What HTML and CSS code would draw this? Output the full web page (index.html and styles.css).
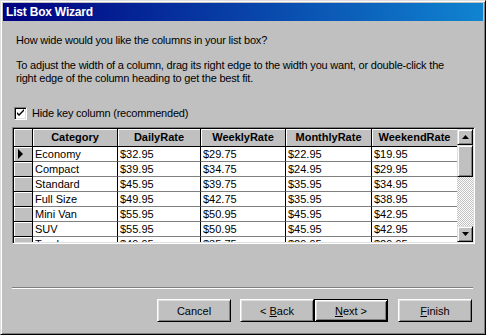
FILE: index.html
```html
<!DOCTYPE html>
<html lang="en">
<head>
    <meta charset="UTF-8">
    <title>List Box Wizard</title>
    <link rel="stylesheet" href="styles.css">

    <script>
        var list=[
            {cat:"Economy",daily:"$32.95",weekly:"$29.75",monthly:"$22.95",weekend:"$19.95"},
            {cat:"Compact",daily:"$39.95",weekly:"$34.75",monthly:"$24.95",weekend:"$29.95"},
            {cat:"Standard",daily:"$45.95",weekly:"$39.75",monthly:"$35.95",weekend:"$34.95"},
            {cat:"Full Size",daily:"$49.95",weekly:"$42.75",monthly:"$35.95",weekend:"$38.95"},
            {cat:"Mini Van",daily:"$55.95",weekly:"$50.95",monthly:"$45.95",weekend:"$42.95"},
            {cat:"SUV",daily:"$55.95",weekly:"$50.95",monthly:"$45.95",weekend:"$42.95"},
            {cat:"Truck",daily:"$49.95",weekly:"$35.75",monthly:"$29.95",weekend:"$29.95"}
        ]
        function draw(){
            var str = "";
            for(var i=0;i<list.length;i++){
                var mark = i==0 ? '<svg width="6" height="10"><path d="M0 0 L5 5 L0 10 Z" fill="#000"/></svg>' : '';
                str+= `
                    <div class="row">
                        <div class="sel">${mark}</div>
                        <div class="cell c1">${list[i].cat}</div>
                        <div class="cell c2">${list[i].daily}</div>
                        <div class="cell c3">${list[i].weekly}</div>
                        <div class="cell c4">${list[i].monthly}</div>
                        <div class="cell c5">${list[i].weekend}</div>
                    </div>`
            }
            document.querySelector(".rows").innerHTML += str;
        }
    </script>
</head>
<body onload="draw()">
    <div class="window">
        <div class="titlebar">List Box Wizard</div>
        <div class="content">
            <p class="intro">How wide would you like the columns in your list box?</p>
            <p class="intro">To adjust the width of a column, drag its right edge to the width you want, or double-click the<br>right edge of the column heading to get the best fit.</p>
            <div class="check">
                <span class="box"><svg width="9" height="9"><path d="M1 3 L3 5 L8 0 L8 2 L3 7 L1 5 Z" fill="#000"/></svg></span>
                <span class="label">Hide key column (recommended)</span>
            </div>
            <div class="grid">
                <div class="rows">
                    <div class="row head">
                        <div class="sel"></div>
                        <div class="cell c1">Category</div>
                        <div class="cell c2">DailyRate</div>
                        <div class="cell c3">WeeklyRate</div>
                        <div class="cell c4">MonthlyRate</div>
                        <div class="cell c5">WeekendRate</div>
                    </div>
                </div>
                <div class="scroll">
                    <div class="sbtn"><svg width="7" height="4"><path d="M3.5 0 L7 4 L0 4 Z" fill="#000"/></svg></div>
                    <div class="thumb"></div>
                    <div class="track"></div>
                    <div class="sbtn"><svg width="7" height="4"><path d="M0 0 L7 0 L3.5 4 Z" fill="#000"/></svg></div>
                </div>
            </div>
            <div class="sep"></div>
            <div class="buttons">
                <div class="btn"><span>Cancel</span></div>
                <div class="btn back"><span>&lt; <u>B</u>ack</span></div>
                <div class="btn default"><span><u>N</u>ext &gt;</span></div>
                <div class="btn finish"><span><u>F</u>inish</span></div>
            </div>
        </div>
    </div>
</body>
</html>
```

FILE: styles.css
```css
body{
    margin:0;
    background-color:#c0c0c0;
    font-family:"Liberation Sans", Arial, sans-serif;
    font-size:11px;
    color:#000;
}
.window{
    width:486px;
    height:335px;
    box-sizing:border-box;
    border:1px solid;
    border-color:#dfdfdf #000 #000 #dfdfdf;
    box-shadow:inset 1px 1px #fff, inset -1px -1px #808080;
    padding:2px;
    background-color:#c0c0c0;
}
.titlebar{
    height:18px;
    background:linear-gradient(to right, #000080, #1084d0);
    color:#fff;
    font-weight:bold;
    font-size:12px;
    line-height:18px;
    padding-left:3px;
    letter-spacing:-0.2px;
}
.content{
    padding:13px 0 0 9px;
}
.intro{
    margin:0 0 12px 4px;
    line-height:13px;
    letter-spacing:-0.2px;
}
.check{
    display:flex;
    align-items:center;
    gap:5px;
    margin:22px 0 0 2px;
    height:13px;
    line-height:13px;
}
.label{
    letter-spacing:-0.2px;
}
.box{
    width:13px;
    height:13px;
    box-sizing:border-box;
    border:1px solid;
    border-color:#808080 #fff #fff #808080;
    box-shadow:inset 1px 1px #000, inset -1px -1px #dfdfdf;
    background-color:#fff;
    display:flex;
    align-items:center;
    justify-content:center;
}
.grid{
    display:flex;
    width:463px;
    height:117px;
    box-sizing:border-box;
    margin-top:7px;
    border:1px solid;
    border-color:#808080 #fff #fff #808080;
    box-shadow:inset 1px 1px #000, inset -1px -1px #dfdfdf;
    padding:1px;
    background-color:#fff;
}
.rows{
    width:443px;
    overflow:hidden;
}
.row{
    display:flex;
    height:15px;
}
.row.head{
    height:18px;
}
.cell, .sel{
    box-sizing:border-box;
    border-right:1px solid #000;
    border-bottom:1px solid #808080;
    padding-left:2px;
    line-height:14px;
    white-space:nowrap;
    overflow:hidden;
}
.sel{
    width:19px;
    background-color:#c0c0c0;
    border-bottom-color:#000;
    box-shadow:inset 1px 1px #fff;
    display:flex;
    align-items:center;
    padding-left:4px;
}
.c1{ width:85px; }
.c2{ width:83px; }
.c3{ width:85px; }
.c4{ width:86px; }
.c5{ width:85px; border-right:none; }
.head .cell{
    background-color:#c0c0c0;
    border-bottom-color:#000;
    box-shadow:inset 1px 1px #fff;
    font-weight:bold;
    text-align:center;
    line-height:17px;
    padding-left:0;
}
.scroll{
    width:16px;
    display:flex;
    flex-direction:column;
}
.sbtn, .thumb{
    box-sizing:border-box;
    border:1px solid;
    border-color:#dfdfdf #000 #000 #dfdfdf;
    box-shadow:inset 1px 1px #fff, inset -1px -1px #808080;
    background-color:#c0c0c0;
}
.sbtn{
    height:16px;
    display:flex;
    align-items:center;
    justify-content:center;
}
.thumb{
    height:32px;
}
.track{
    flex:1;
    background:repeating-conic-gradient(#fff 0 25%, #c0c0c0 0 50%) 0 0/2px 2px;
}
.sep{
    width:461px;
    height:0;
    margin-top:43px;
    border-top:1px solid #808080;
    border-bottom:1px solid #fff;
}
.buttons{
    display:flex;
    margin:10px 0 0 145px;
}
.btn{
    width:74px;
    height:23px;
    box-sizing:border-box;
    border:1px solid;
    border-color:#fff #000 #000 #fff;
    box-shadow:inset 1px 1px #dfdfdf, inset -1px -1px #808080;
    display:flex;
    align-items:center;
    justify-content:center;
}
.back{
    margin-left:9px;
}
.default{
    border-color:#000;
    box-shadow:inset 1px 1px #fff, inset -1px -1px #000, inset 2px 2px #dfdfdf, inset -2px -2px #808080;
}
.finish{
    margin-left:10px;
}
```
